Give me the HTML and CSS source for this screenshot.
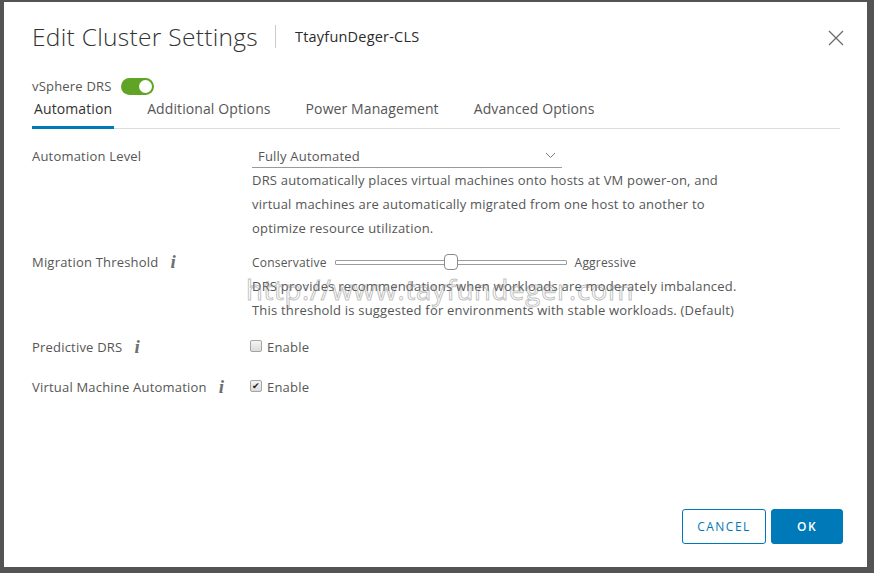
FILE: index.html
```html
<!DOCTYPE html>
<html lang="en">
<head>
    <meta charset="UTF-8">
    <title>Edit Cluster Settings</title>
    <link rel="stylesheet" href="styles.css">
</head>
<body>
    <div class="modal">
        <div class="modal-header">
            <h1 class="modal-title">Edit Cluster Settings</h1>
            <span class="title-divider"></span>
            <span class="cluster-name">TtayfunDeger-CLS</span>
            <button class="close-btn" aria-label="Close">
                <svg width="16" height="16" viewBox="0 0 16 16"><path d="M1 1 L15 15 M15 1 L1 15" stroke="#6b6b6b" stroke-width="1.3" fill="none"/></svg>
            </button>
        </div>

        <div class="drs-toggle">
            <span>vSphere DRS</span>
            <span class="switch"><span class="knob"></span></span>
        </div>

        <div class="tabs">
            <span class="tab active">Automation</span>
            <span class="tab">Additional Options</span>
            <span class="tab">Power Management</span>
            <span class="tab">Advanced Options</span>
        </div>

        <div class="form">
            <div class="form-row">
                <div class="label">Automation Level</div>
                <div class="control">
                    <div class="select">
                        <span>Fully Automated</span>
                        <svg width="11" height="7" viewBox="0 0 11 7"><path d="M1 1 L5.5 5.5 L10 1" stroke="#7a7a7a" stroke-width="1" fill="none"/></svg>
                    </div>
                    <p class="help">DRS automatically places virtual machines onto hosts at VM power-on, and<br>virtual machines are automatically migrated from one host to another to<br>optimize resource utilization.</p>
                </div>
            </div>

            <div class="form-row">
                <div class="label">Migration Threshold <span class="info">i</span></div>
                <div class="control">
                    <div class="slider-row">
                        <span>Conservative</span>
                        <span class="slider"><span class="thumb"></span></span>
                        <span>Aggressive</span>
                    </div>
                    <p class="help">DRS provides recommendations when workloads are moderately imbalanced.<br>This threshold is suggested for environments with stable workloads. (Default)</p>
                </div>
            </div>

            <div class="form-row check-row">
                <div class="label">Predictive DRS <span class="info">i</span></div>
                <div class="control">
                    <label class="checkbox"><span class="box"></span>Enable</label>
                </div>
            </div>

            <div class="form-row check-row">
                <div class="label">Virtual Machine Automation <span class="info">i</span></div>
                <div class="control">
                    <label class="checkbox"><span class="box checked">&#10004;</span>Enable</label>
                </div>
            </div>
        </div>

        <div class="modal-footer">
            <button class="btn btn-outline">CANCEL</button>
            <button class="btn btn-primary">OK</button>
        </div>

        <div class="watermark">http://www.tayfundeger.com</div>
    </div>
</body>
</html>
```

FILE: styles.css
```css
body {
    margin: 0;
    padding: 2px 0 0 4px;
    height: 573px;
    box-sizing: border-box;
    overflow: hidden;
    background-color: #545454;
    font-family: "Open Sans", "Liberation Sans", sans-serif;
    color: #565656;
    letter-spacing: 0.2px;
}

.modal {
    position: relative;
    width: 863px;
    height: 565px;
    box-sizing: border-box;
    background: #fff;
    padding: 0 27px 0 28px;
    display: flex;
    flex-direction: column;
}

.modal-header {
    display: flex;
    align-items: center;
    height: 68px;
}

.modal-title {
    margin: 0;
    font-size: 24.5px;
    font-weight: 300;
    color: #333;
    letter-spacing: 0.3px;
}

.title-divider {
    width: 1px;
    height: 23px;
    background: #ccc;
    margin: 0 19px 0 17px;
}

.cluster-name {
    font-size: 14.5px;
    font-weight: 500;
    color: #2b2b2b;
}

.close-btn {
    margin-left: auto;
    margin-right: -4px;
    margin-top: 4px;
    background: none;
    border: none;
    padding: 0;
    width: 16px;
    height: 16px;
    cursor: pointer;
}

.drs-toggle {
    display: flex;
    align-items: center;
    gap: 9px;
    font-size: 13px;
    height: 18px;
    margin-top: 7px;
}

.switch {
    width: 33px;
    height: 17px;
    border-radius: 9px;
    background: #60a425;
    position: relative;
}

.switch .knob {
    position: absolute;
    right: 2px;
    top: 2px;
    width: 13px;
    height: 13px;
    border-radius: 50%;
    background: #fff;
}

.tabs {
    display: flex;
    gap: 31px;
    border-bottom: 1px solid #ddd;
}

.tab {
    font-size: 14px;
    letter-spacing: 0.1px;
    padding: 4px 2px 8px;
    border-bottom: 3px solid transparent;
    margin-bottom: -1px;
}

.tab.active {
    color: #333;
    border-bottom-color: #0079b8;
}

.form {
    display: flex;
    flex-direction: column;
    gap: 10px;
    margin-top: 15px;
}

.form-row {
    display: grid;
    grid-template-columns: 220px 1fr;
    font-size: 13px;
}

.label {
    line-height: 24px;
    display: flex;
    align-items: center;
    gap: 12px;
    align-self: start;
}

.info {
    font-family: "Liberation Serif", serif;
    font-style: italic;
    font-weight: bold;
    font-size: 19px;
    color: #6f6f6f;
}

.select {
    width: 310px;
    height: 24px;
    box-sizing: border-box;
    border-bottom: 1px solid #9a9a9a;
    display: flex;
    align-items: center;
    justify-content: space-between;
    padding: 0 6px;
    color: #565656;
}

.help {
    margin: 0;
    line-height: 24px;
}

.slider-row {
    display: flex;
    align-items: center;
    height: 24px;
    gap: 8px;
    font-size: 12px;
}

.slider {
    position: relative;
    width: 230px;
    height: 3px;
    border: 1px solid #9c9c9c;
    border-radius: 1px;
}

.slider .thumb {
    position: absolute;
    left: 108px;
    top: -7px;
    width: 12px;
    height: 14px;
    border: 1px solid #8a8a8a;
    border-radius: 4px;
    background: #fff;
}

.check-row {
    margin-top: 1px;
}

.check-row + .check-row {
    margin-top: 2px;
}

.check-row .label,
.checkbox {
    line-height: 28px;
}

.checkbox {
    display: flex;
    align-items: center;
    gap: 5px;
    margin-left: -2px;
}

.box {
    width: 10px;
    height: 10px;
    border: 1px solid #a5a5a5;
    border-radius: 2px;
    background: linear-gradient(#f4f4f4, #dcdcdc);
    font-size: 9px;
    line-height: 10px;
    text-align: center;
    color: #222;
    margin-top: -2px;
}

.modal-footer {
    margin-top: auto;
    display: flex;
    justify-content: flex-end;
    gap: 5px;
    padding: 0 0 23px;
    margin-right: -3px;
}

.btn {
    height: 35px;
    box-sizing: border-box;
    border-radius: 3px;
    font-family: inherit;
    font-size: 12px;
    font-weight: 600;
    letter-spacing: 1.5px;
    cursor: pointer;
}

.btn-outline {
    width: 84px;
    border: 1px solid #0079b8;
    background: #fff;
    color: #0079b8;
    font-weight: 500;
}

.btn-primary {
    width: 72px;
    border: 1px solid #0079b8;
    background: #0079b8;
    color: #fff;
}

.watermark {
    position: absolute;
    left: 242px;
    top: 269px;
    font-size: 27.5px;
    letter-spacing: 0.7px;
    color: transparent;
    -webkit-text-stroke: 1px rgba(140, 140, 140, 0.55);
    pointer-events: none;
}
```
